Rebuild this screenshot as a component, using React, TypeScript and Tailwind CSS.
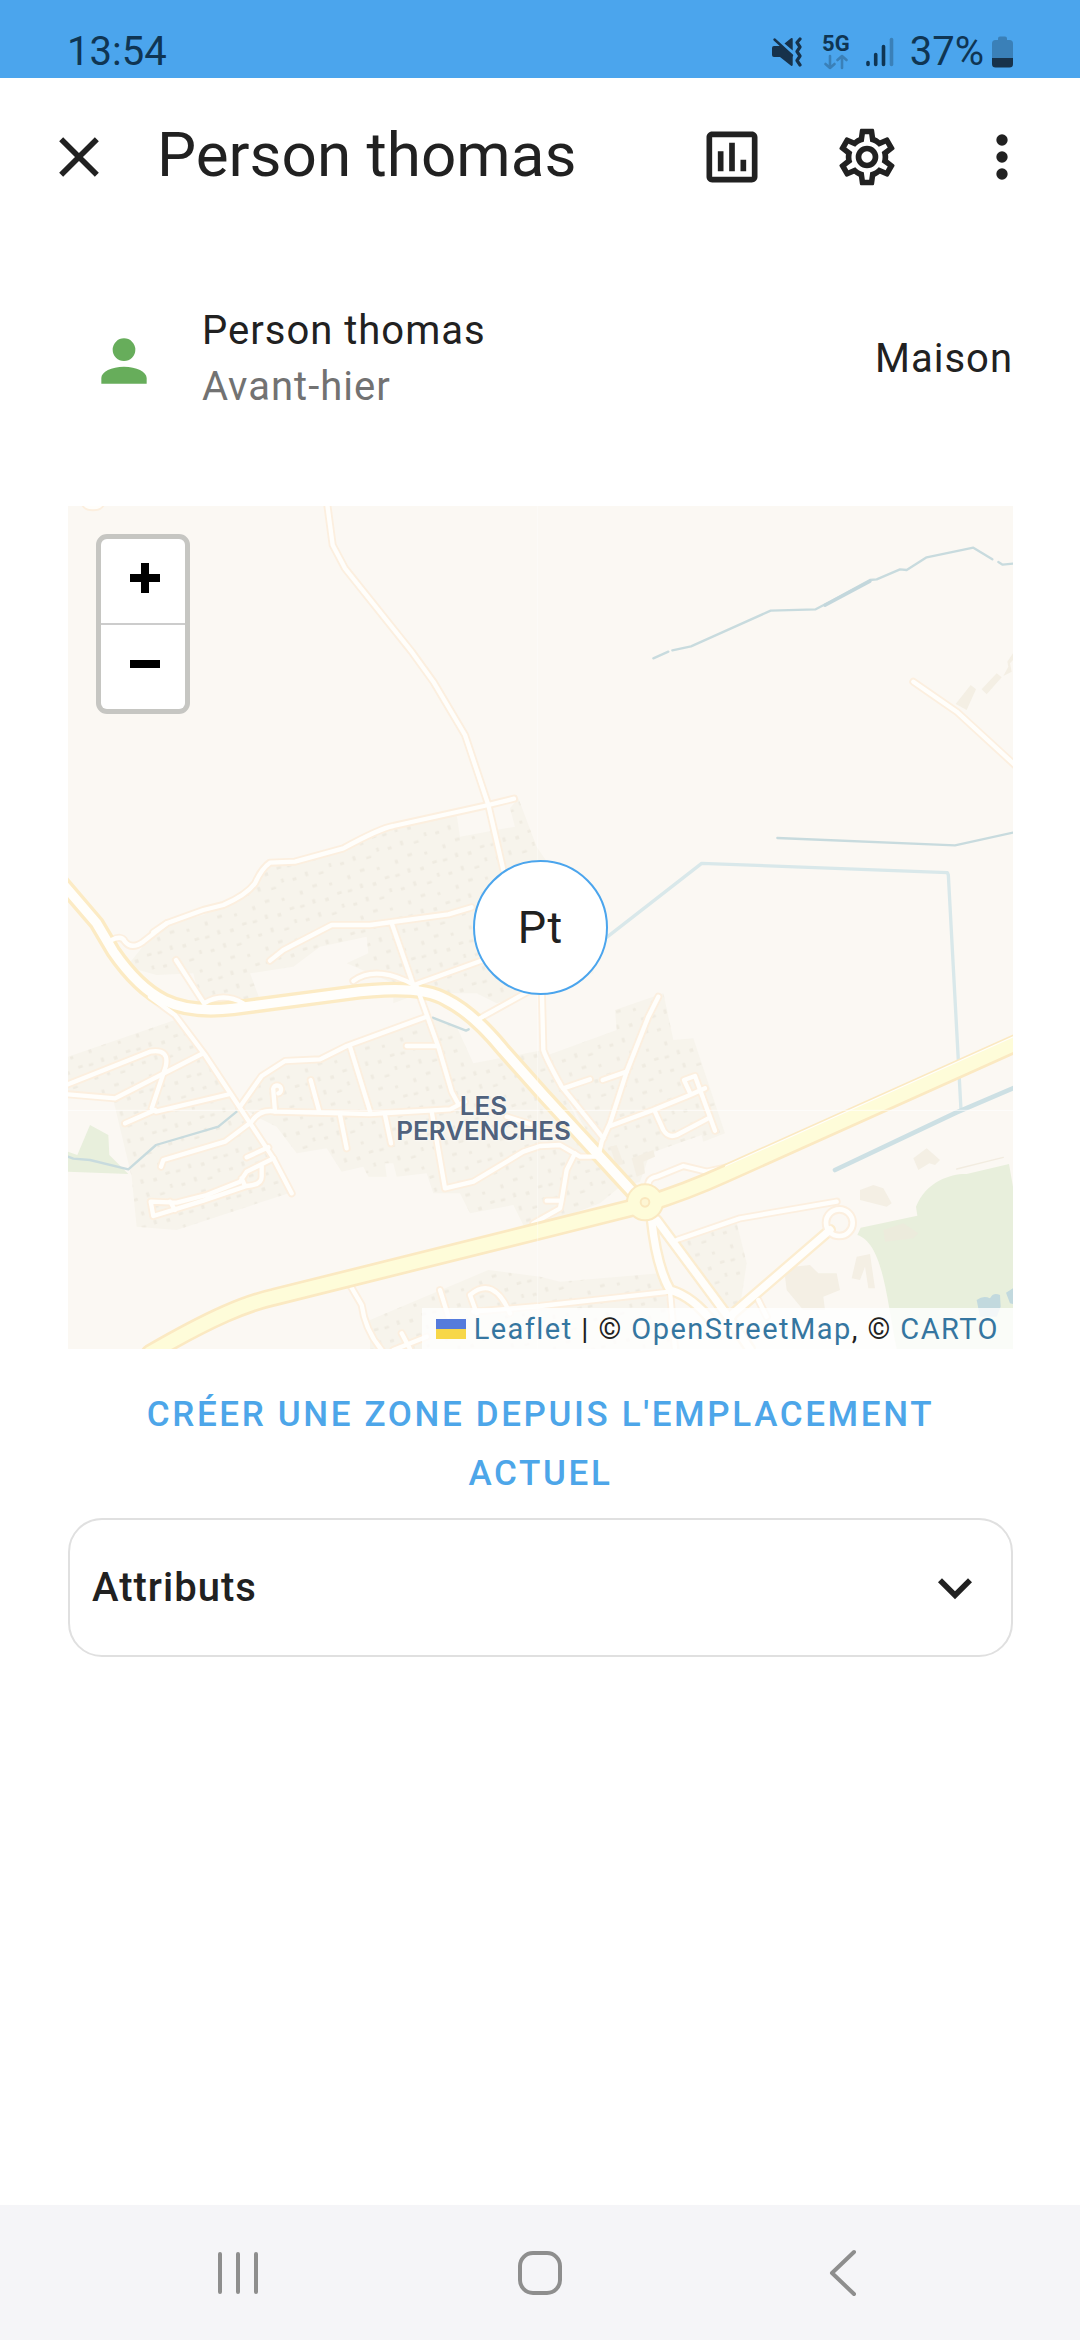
import type { ReactNode } from "react";

const ICONS = {
  close:
    "M19,6.41L17.59,5L12,10.59L6.41,5L5,6.41L10.59,12L5,17.59L6.41,19L12,13.41L17.59,19L19,17.59L13.41,12L19,6.41Z",
  chart:
    "M9 17H7V10H9V17M13 17H11V7H13V17M17 17H15V13H17V17M19 19H5V5H19V19.1M19 3H5C3.9 3 3 3.9 3 5V19C3 20.1 3.9 21 5 21H19C20.1 21 21 20.1 21 19V5C21 3.9 20.1 3 19 3Z",
  cog: "M12,8A4,4 0 0,1 16,12A4,4 0 0,1 12,16A4,4 0 0,1 8,12A4,4 0 0,1 12,8M12,10A2,2 0 0,0 10,12A2,2 0 0,0 12,14A2,2 0 0,0 14,12A2,2 0 0,0 12,10M10,22C9.75,22 9.54,21.82 9.5,21.58L9.13,18.93C8.5,18.68 7.96,18.34 7.44,17.94L4.95,18.95C4.73,19.03 4.46,18.95 4.34,18.73L2.34,15.27C2.21,15.05 2.27,14.78 2.46,14.63L4.57,12.97L4.5,12L4.57,11L2.46,9.37C2.27,9.22 2.21,8.95 2.34,8.73L4.34,5.27C4.46,5.05 4.73,4.96 4.95,5.05L7.44,6.05C7.96,5.66 8.5,5.32 9.13,5.07L9.5,2.42C9.54,2.18 9.75,2 10,2H14C14.25,2 14.46,2.18 14.5,2.42L14.87,5.07C15.5,5.32 16.04,5.66 16.56,6.05L19.05,5.05C19.27,4.96 19.54,5.05 19.66,5.27L21.66,8.73C21.79,8.95 21.73,9.22 21.54,9.37L19.43,11L19.5,12L19.43,13L21.54,14.63C21.73,14.78 21.79,15.05 21.66,15.27L19.66,18.73C19.54,18.95 19.27,19.04 19.05,18.95L16.56,17.95C16.04,18.34 15.5,18.68 14.87,18.93L14.5,21.58C14.46,21.82 14.25,22 14,22H10M11.25,4L10.88,6.61C9.68,6.86 8.62,7.5 7.85,8.39L5.44,7.35L4.69,8.65L6.8,10.2C6.4,11.37 6.4,12.64 6.8,13.8L4.68,15.36L5.43,16.66L7.86,15.62C8.63,16.5 9.68,17.14 10.87,17.38L11.24,20H12.76L13.13,17.39C14.32,17.14 15.37,16.5 16.14,15.62L18.57,16.66L19.32,15.36L17.2,13.81C17.6,12.64 17.6,11.37 17.2,10.2L19.31,8.65L18.56,7.35L16.15,8.39C15.38,7.5 14.32,6.86 13.12,6.62L12.75,4H11.25Z",
  dots: "M12,16A2,2 0 0,1 14,18A2,2 0 0,1 12,20A2,2 0 0,1 10,18A2,2 0 0,1 12,16M12,10A2,2 0 0,1 14,12A2,2 0 0,1 12,14A2,2 0 0,1 10,12A2,2 0 0,1 12,10M12,4A2,2 0 0,1 14,6A2,2 0 0,1 12,8A2,2 0 0,1 10,6A2,2 0 0,1 12,4Z",
  account:
    "M12,4A4,4 0 0,1 16,8A4,4 0 0,1 12,12A4,4 0 0,1 8,8A4,4 0 0,1 12,4M12,14C16.42,14 20,15.79 20,18V20H4V18C4,15.79 7.58,14 12,14Z",
  chevron: "M7.41,8.58L12,13.17L16.59,8.58L18,10L12,16L6,10L7.41,8.58Z",
};

function Icon({ path }: { path: string }) {
  return (
    <svg viewBox="0 0 24 24" className="size-[68px] fill-current" aria-hidden="true">
      <path d={path} />
    </svg>
  );
}

function IconButton({ label, path }: { label: string; path: string }) {
  return (
    <button type="button" aria-label={label} className="flex size-[135px] shrink-0 items-center justify-center">
      <Icon path={path} />
    </button>
  );
}

function StatusBar() {
  return (
    <div className="flex h-[78px] items-end justify-between bg-[#4ba5ed] px-[67px] pb-[3px] text-[40px] leading-[46px] text-[#0f3553]">
      <time>13:54</time>
      <div className="flex items-center">
        <svg viewBox="0 0 30 30" className="mr-5 size-[30px] text-[#17324b]" aria-label="Vibreur">
          <path
            d="M2 9h8l10.700 9v10a1 1 0 0 1-1.600.7L8 20H2a2 2 0 0 1-2-2v-7a2 2 0 0 1 2-2zM12.500 6.500 19 1.300a1 1 0 0 1 1.700.8V13.500z"
            fill="currentColor"
          />
          <path d="M2.500 2.500 20 18.500" stroke="currentColor" strokeWidth="2.400" strokeLinecap="round" />
          <path
            d="M28 2 25 5.500 28 10 25 14.500 28 19 25 23.500 28 28"
            fill="none"
            stroke="currentColor"
            strokeWidth="3.200"
            strokeLinecap="round"
            strokeLinejoin="round"
          />
        </svg>
        <div className="mr-4 flex flex-col items-center">
          <span className="text-[22px] leading-[20px] font-bold">5G</span>
          <svg viewBox="0 0 24 16" className="h-4 w-6" aria-hidden="true">
            <path
              d="M6 2v12M1.500 10 6 14l4.500-4M18 14V2M13.500 6 18 2l4.500 4"
              fill="none"
              stroke="#3a80b8"
              strokeWidth="2.600"
              strokeLinecap="round"
              strokeLinejoin="round"
            />
          </svg>
        </div>
        <svg viewBox="0 0 28 30" className="mr-4 h-[30px] w-7" aria-label="Signal">
          <path d="M2 25.500v2M9.700 17.500v10M17.500 9.500v18" stroke="#0f3553" strokeWidth="3.600" strokeLinecap="round" />
          <path d="M25.500 2.500v25" stroke="#3a80b8" strokeWidth="3.600" strokeLinecap="round" />
        </svg>
        <span className="mr-2">37%</span>
        <svg viewBox="0 0 21 32" className="h-8 w-[21px]" aria-label="Batterie">
          <path d="M6 4V2.500A2 2 0 0 1 8 0.500h5a2 2 0 0 1 2 2V4h2.500A3.500 3.500 0 0 1 21 7.500V22H0V7.500A3.500 3.500 0 0 1 3.500 4z" fill="#3a80b8" />
          <path d="M0 22h21v6a3.500 3.500 0 0 1-3.500 3.500h-14A3.500 3.500 0 0 1 0 28z" fill="#17324b" />
        </svg>
      </div>
    </div>
  );
}

const RESIDENTIAL = [
  "M240 1350 300 1275 430 1245 560 1180 620 1095 700 1085 850 1045 980 985 1190 945 1200 1010 1365 980 1350 925 1375 895 1430 1040 1600 1290 1600 1420 1310 1510 1250 1480 1080 1480 1000 1510 1000 1450 860 1390 925 1360 920 1310 780 1340 700 1400 570 1420 600 1500 420 1500 400 1420 290 1425 200 1400Z",
  "M24 1670 345 1560 430 1650 520 1810 640 1970 700 2075 350 2190 230 2180 215 2030 160 1800 24 1780Z",
  "M545 1820 620 1720 680 1680 780 1675 870 1630 1100 1550 1190 1580 1240 1690 1450 1650 1600 1960 1680 2060 1620 2110 1540 2140 1440 2175 1390 2175 1360 2115 1230 2140 1200 2080 1120 2080 1100 2020 1010 2030 1000 1990 975 1990 980 2030 925 2030 910 2000 845 2015 800 1945 710 1960 650 1880 590 1850Z",
  "M1450 1670 1670 1590 1665 1530 1810 1480 1840 1620 1900 1615 1995 1900 1930 1925 1925 1905 1770 1960 1740 2045 1690 2060 1620 1960 1520 1790Z",
  "M930 2460 1285 2310 1440 2330 1500 2345 1800 2320 1860 2547 930 2547Z",
  "M1830 2230 2030 2170 2060 2290 2040 2420 1990 2440 1900 2330Z",
];

const WOODS = [
  "M90 1875 145 1905 148 1965 205 2022 24 2015 24 1955 52 1965Z",
  "M2847 1992 2859 2060 2859 2547 2510 2547C2480 2400 2470 2230 2392 2205L2402 2183 2572 2147 2568 2120C2600 2040 2680 2020 2720 2022Z",
];

const STREAMS = [
  "M24 1970 40 1976 90 1980 205 2008 288 1935 475 1880 530 1835",
  "M1118 1553 1218 1592 1226 1588",
  "M1780 475 1825 455M1837 451 1893 439 2132 332 2267 328 2310 305 2430 240 2450 238 2520 208 2540 210 2600 172 2740 143 2797 178M2815 186 2828 194 2859 191",
  "M2152 1014 2685 1036 2859 998",
];

const CANALS = ["M1640 1312 1925 1090 2662 1118 2665 1125 2703 1830"];

const STREETS = [
  "M800 0 818 135 855 205 1055 455 1120 545 1215 705 1285 915 1330 1110",
  "M280 1297 320 1270 430 1230 490 1215Q560 1185 585 1150 605 1105 630 1088L705 1085 850 1045Q960 985 1000 978L1285 915 1362 896",
  "M155 1320Q185 1305 195 1325 215 1350 250 1325L320 1270",
  "M348 1380 432 1510Q490 1475 550 1510",
  "M630 1382 670 1350 815 1275 930 1275 1165 1243 1235 1222",
  "M995 1270 1060 1455",
  "M880 1443C930 1405 1000 1420 1062 1455L1270 1380",
  "M1245 1563 1440 1455",
  "M1445 1450 1450 1650Q1460 1680 1505 1760L1630 1915",
  "M1068 1455 1135 1640 1175 1775 1195 1812",
  "M270 1490 345 1545 435 1665 640 1975 695 2080",
  "M540 1820 605 1728 675 1683 780 1678 860 1638 1100 1550",
  "M24 1753 270 1655Q330 1645 317 1700L275 1825 288 1835 510 1782",
  "M24 1783 165 1795 425 1662",
  "M195 1870 285 1830",
  "M303 2000 310 1980 495 1925 575 1865Q600 1825 650 1835L930 1842 1170 1828 1215 1805",
  "M645 1835 640 1772A12 12 0 1 1 655 1780",
  "M752 1740 778 1835",
  "M870 1640 932 1840",
  "M840 1845 860 1945M975 1845 993 1930M1040 1638H1130",
  "M560 1972 625 1942",
  "M640 1975 560 2015 540 2045 440 2085 350 2108 272 2105 280 2148 430 2102 560 2058Q605 2055 605 2030V1995M330 2105 345 2130M545 2035 555 2058",
  "M1115 1835 1155 2065 1240 2045 1390 1955 1440 1938 1500 1935 1560 1970 1620 1970",
  "M1340 1850 1420 1875M1545 1960 1520 2010 1505 2100 1500 2125 1420 2170M1460 2102H1500",
  "M1795 1490 1765 1550 1700 1715 1650 1870 1625 1925 1615 1970",
  "M1510 1765 1590 1738M1628 1740 1700 1715",
  "M1650 1878 1780 1830 1890 1785 1935 1765M1892 1783 1872 1740 1905 1728 1965 1892M1785 1835 1810 1890Q1825 1915 1850 1905L1945 1855",
  "M1765 2065Q1760 2035 1790 2030L1870 1998 1940 2015 2010 2000",
  "M2560 545 2690 635 2870 800",
  "M870 2355 905 2415Q915 2490 965 2550M1140 2370 1165 2450M1025 2500 1050 2547M1000 2550 1100 2510M1250 2440 1230 2385Q1300 2325 1350 2440",
  "M1240 2435 1440 2418 1830 2375 1845 2547",
  "M1850 2220 2040 2155 2330 2105",
  "M2095 2400 2120 2450",
  "M74 10A26 16 0 0 0 124 10",
];

const AVENUES = ["M2310 2190 2020 2440 1980 2500", "M1790 2160 1990 2430 2070 2547", "M1775 2160Q1790 2300 1830 2370 1900 2390 1960 2470"];

const MAIN_ROAD =
  "M-10 1130 110 1270 160 1355C260 1500 350 1545 520 1525L860 1480Q1080 1450 1160 1500 1240 1540 1330 1650L1450 1785 1730 2090";

const HIGHWAY = "M270 2560C460 2450 560 2410 640 2392L1430 2195 1750 2115Q1880 2075 2000 2020L2880 1625";

function MapTiles() {
  return (
    <svg
      viewBox="24 18 2835 2529"
      preserveAspectRatio="xMidYMid slice"
      className="absolute inset-0 size-full"
      fill="none"
      strokeLinecap="round"
      strokeLinejoin="round"
      role="img"
      aria-label="Carte"
    >
      <defs>
        <pattern id="houses" width="150" height="128" patternUnits="userSpaceOnUse" patternTransform="rotate(-18)">
          <path
            d="M12 14h12v9h-12zM52 8h9v14h-9zM92 22h15v8h-15zM128 6h8v12h-8zM20 58h9v12h-9zM62 52h14v9h-14zM112 62h9v9h-9zM8 100h14v8h-14zM48 94h9v13h-9zM86 102h11v10h-11zM126 96h14v8h-14z"
            fill="#efebe1"
          />
        </pattern>
      </defs>
      <rect x="24" y="18" width="2835" height="2529" fill="#fbf8f3" />
      {RESIDENTIAL.map((d) => (
        <path key={d} d={d} fill="#f7f4ec" />
      ))}
      {RESIDENTIAL.map((d) => (
        <path key={d} d={d} fill="url(#houses)" />
      ))}
      {WOODS.map((d) => (
        <path key={d} d={d} fill="#e8efdc" />
      ))}
      <g fill="#f4efe4">
        <path d="M2732 555 2748 568 2720 630 2687 612ZM2810 520 2825 532 2780 583 2765 568ZM2859 460V480L2850 490 2855 515 2830 528 2845 500 2842 485Z" />
        <path d="M2560 1975 2600 1945 2640 1980 2625 1995 2608 1990 2575 2010ZM2400 2070 2440 2055 2470 2065 2495 2110 2480 2120 2400 2100ZM2175 2330 2200 2300 2250 2295 2275 2320 2330 2320 2340 2370 2290 2390 2295 2430 2230 2430 2180 2370ZM2390 2270 2430 2262 2445 2365 2425 2365 2415 2300 2400 2340 2375 2335Z" />
        <path d="M1650 1940 1670 1935 1690 1990 1670 2000ZM1715 1975 1780 1950 1785 1970 1750 1985 1755 2020 1730 2030Z" />
      </g>
      <path d="M2470 2190 2530 2170 2575 2200 2560 2215 2475 2225Z" fill="#ecebdc" />
      <g fill="#c2d9de">
        <path d="M2750 2400Q2770 2385 2790 2395 2800 2375 2820 2385L2822 2420 2810 2450H2760ZM2859 2365 2838 2378 2850 2410 2859 2412Z" />
      </g>
      {CANALS.map((d) => (
        <path key={d} d={d} stroke="#d9e8ea" strokeWidth="10" />
      ))}
      <path d="M2325 2010 2690 1837 2870 1760" stroke="#cde0e4" strokeWidth="14" />
      {STREAMS.map((d) => (
        <path key={d} d={d} stroke="#c8dbde" strokeWidth="7" />
      ))}
      <path d="M2295 316 2430 244" stroke="#c3d7dc" strokeWidth="10" />
      <path d="M2690 2007 2830 1972" stroke="#f2ece0" strokeWidth="4" />
      <g stroke="#fcefdf">
        {STREETS.map((d) => (
          <path key={d} d={d} strokeWidth="24" />
        ))}
        {AVENUES.map((d) => (
          <path key={d} d={d} strokeWidth="36" stroke="#fcedd0" />
        ))}
        <circle cx="2338" cy="2168" r="40" strokeWidth="26" />
        <path d={MAIN_ROAD} strokeWidth="48" stroke="#fcebc4" />
      </g>
      <g stroke="#fffefb">
        {STREETS.map((d) => (
          <path key={d} d={d} strokeWidth="13" />
        ))}
        {AVENUES.map((d) => (
          <path key={d} d={d} strokeWidth="22" />
        ))}
        <circle cx="2338" cy="2168" r="40" strokeWidth="14" />
        <path d={MAIN_ROAD} strokeWidth="28" />
      </g>
      <g stroke="#fbe9c2">
        <path d={HIGHWAY} strokeWidth="56" />
        <circle cx="1755" cy="2107" r="32" strokeWidth="50" />
      </g>
      <path d="M2000 2000 2880 1605" stroke="#fffefb" strokeWidth="10" />
      <g stroke="#fefcd9">
        <path d={HIGHWAY} strokeWidth="40" />
        <circle cx="1755" cy="2107" r="30" strokeWidth="42" />
      </g>
      <circle cx="1755" cy="2107" r="13" stroke="#fae7bd" strokeWidth="6" fill="#fdf6d4" />
      <path d="M1433 18V2547" stroke="#ffffff" strokeOpacity="0.4" strokeWidth="3" />
      <path d="M24 1831H2859" stroke="#ffffff" strokeOpacity="0.7" strokeWidth="3" />
    </svg>
  );
}

function ZoomButton({ label, children }: { label: string; children: ReactNode }) {
  return (
    <button type="button" aria-label={label} className="size-[84px] bg-white">
      <svg viewBox="0 0 84 84" className="size-full stroke-black" strokeWidth="8" aria-hidden="true">
        {children}
      </svg>
    </button>
  );
}

function MapCard() {
  const link = "text-[#3576a0]";
  return (
    <section aria-label="Localisation" className="relative flex h-[843px] items-center justify-center overflow-hidden">
      <MapTiles />
      <p className="absolute top-[587px] left-1/2 -ml-[147px] w-[180px] text-center font-['Inter'] text-[26px] leading-[25px] font-semibold text-[#50627d] [text-shadow:0_0_3px_#ffffff]">
        LES PERVENCHES
      </p>
      <div className="absolute top-7 left-7 flex flex-col gap-[2px] overflow-hidden rounded-[11px] border-[5px] border-[#c6c6c2] bg-[#cccccc]">
        <ZoomButton label="Zoom avant">
          <path d="M29 39h30M44 24v30" />
        </ZoomButton>
        <ZoomButton label="Zoom arrière">
          <path d="M29 39h30" />
        </ZoomButton>
      </div>
      <div className="relative flex size-[135px] items-center justify-center rounded-full border-2 border-[#4ba5ed] bg-white text-[45px] tracking-wide">
        Pt
      </div>
      <div className="absolute right-0 bottom-0 flex h-[41px] items-center bg-white/80 px-[14px] text-[29px] leading-[38px] tracking-wider">
        <svg viewBox="0 0 30 20" className="mr-2 h-5 w-[30px]" aria-hidden="true">
          <path d="M0 0h30v10H0z" fill="#557bdc" />
          <path d="M0 10h30v10H0z" fill="#f7d748" />
        </svg>
        <p>
          <a href="#leaflet" className={link}>Leaflet</a> | © <a href="#osm" className={link}>OpenStreetMap</a>, ©{" "}
          <a href="#carto" className={link}>CARTO</a>
        </p>
      </div>
    </section>
  );
}

function NavBar() {
  const button = "flex items-center justify-center";
  const icon = "size-12 fill-none stroke-[#8e8e8e]";
  return (
    <nav className="grid h-[135px] grid-cols-3 bg-[#f5f5f8] px-[87px]">
      <button type="button" aria-label="Applications récentes" className={button}>
        <svg viewBox="0 0 48 48" className={icon} strokeWidth="4" strokeLinecap="round">
          <path d="M6 5v38M24 5v38M42 5v38" />
        </svg>
      </button>
      <button type="button" aria-label="Accueil" className={button}>
        <svg viewBox="0 0 48 48" className={icon} strokeWidth="4">
          <rect x="4" y="4" width="40" height="40" rx="13" />
        </svg>
      </button>
      <button type="button" aria-label="Retour" className={button}>
        <svg viewBox="0 0 48 48" className={icon} strokeWidth="4" strokeLinecap="round" strokeLinejoin="round">
          <path d="M36 3 14 24l22 21" />
        </svg>
      </button>
    </nav>
  );
}

export default function App() {
  return (
    <div className="flex min-h-screen flex-col bg-white font-['Roboto',sans-serif] text-[#212121]">
      <StatusBar />
      <header className="flex items-center px-[11px]">
        <IconButton label="Fermer" path={ICONS.close} />
        <h1 className="min-w-0 flex-1 truncate pt-3 pb-4 pl-[11px] text-[62px] leading-[130px]">Person thomas</h1>
        <IconButton label="Historique" path={ICONS.chart} />
        <IconButton label="Paramètres" path={ICONS.cog} />
        <IconButton label="Plus" path={ICONS.dots} />
      </header>
      <main className="flex flex-1 flex-col pt-[67px] pr-[67px] pl-[68px]">
        <div className="mb-[91px] flex items-center text-[40px] leading-[56px] tracking-wide">
          <div className="mr-[22px] flex w-28 justify-center pt-1 text-[#67ad5b]">
            <Icon path={ICONS.account} />
          </div>
          <div className="flex-1">
            <div>Person thomas</div>
            <div className="text-[#727272]">Avant-hier</div>
          </div>
          <div>Maison</div>
        </div>
        <MapCard />
        <button
          type="button"
          className="mt-9 mb-[15px] px-14 text-[35px] leading-[59px] font-medium tracking-[0.075em] text-[#4da6e9] uppercase"
        >
          Créer une zone depuis l'emplacement actuel
        </button>
        <button
          type="button"
          aria-expanded="false"
          className="flex h-[139px] items-center justify-between rounded-[34px] border-2 border-[#e0e0e0] px-[22px] text-[40px] font-medium tracking-wide"
        >
          Attributs
          <Icon path={ICONS.chevron} />
        </button>
      </main>
      <NavBar />
    </div>
  );
}
